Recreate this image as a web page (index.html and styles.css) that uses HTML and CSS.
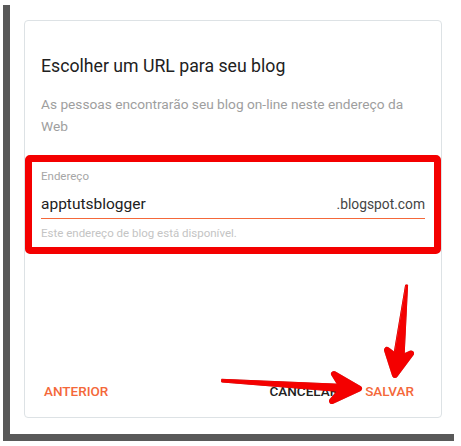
FILE: index.html
```html
<!DOCTYPE html>
<html lang="pt">
<head>
<meta charset="utf-8">
<title>Escolher um URL</title>
<link rel="stylesheet" href="styles.css">
</head>
<body>
<div class="frame">
  <div class="card">
    <h1 class="title">Escolher um URL para seu blog</h1>
    <p class="desc">As pessoas encontrarão seu blog on-line neste endereço da Web</p>
    <div class="field-box">
      <div class="label">Endereço</div>
      <div class="input-row">
        <span class="value">apptutsblogger</span>
        <span class="suffix">.blogspot.com</span>
      </div>
      <div class="helper">Este endereço de blog está disponível.</div>
    </div>
    <div class="actions">
      <span class="btn accent">ANTERIOR</span>
      <span class="spacer"></span>
      <span class="btn plain">CANCELAR</span>
      <span class="btn accent">SALVAR</span>
    </div>
  </div>
</div>
<svg class="arrows" width="461" height="446" viewBox="0 0 461 446" xmlns="http://www.w3.org/2000/svg">
  <g fill="#f40000" stroke="#f40000" stroke-linejoin="round" stroke-linecap="round">
    <polygon points="222,379.3 346,384.5 346,392 222,382" stroke-width="1"/>
    <polygon points="334,374 359,388.5 332,401 343,388.5" stroke-width="6"/>
    <polygon points="406,285 407.6,285 404,358 394,356" stroke-width="1"/>
    <polygon points="387,350 395,375 411,353.5 399,359" stroke-width="6"/>
  </g>
</svg>
</body>
</html>
```
FILE: styles.css
```css
html, body {
  margin: 0;
  padding: 0;
  background: #ffffff;
}
body {
  width: 461px;
  height: 446px;
  position: relative;
  overflow: hidden;
  font-family: Roboto, "Liberation Sans", Arial, sans-serif;
}
.frame {
  margin: 5px 0 0 3px;
  width: 430px;
  height: 414px;
  border-left: 7px solid #595959;
  border-bottom: 7px solid #595959;
  padding: 15px 0 0 14px;
  box-sizing: content-box;
}
.card {
  width: 384px;
  height: 396px;
  border: 1px solid #dde2e5;
  border-radius: 4px;
  padding: 0 16px;
  box-sizing: content-box;
  display: flex;
  flex-direction: column;
}
.title {
  margin: 33px 0 0;
  font-size: 17.7px;
  line-height: 24px;
  font-weight: 400;
  color: #212121;
}
.desc {
  margin: 15px 0 0;
  font-size: 13.7px;
  line-height: 22px;
  color: #9e9e9e;
}
.field-box {
  margin: 18px -16px 0;
  border: 7px solid #f40000;
  border-radius: 5px;
  padding: 7px 9px 7px 9px;
}
.label {
  font-size: 11.5px;
  line-height: 14px;
  color: #a6a6a6;
}
.input-row {
  margin-top: 11px;
  display: flex;
  justify-content: space-between;
  align-items: baseline;
  padding-bottom: 4px;
  border-bottom: 1px solid #f4683a;
}
.value {
  font-size: 15.5px;
  line-height: 20px;
  color: #212121;
}
.suffix {
  font-size: 13.8px;
  line-height: 20px;
  color: #444444;
}
.helper {
  margin-top: 7px;
  font-size: 11.5px;
  line-height: 14px;
  color: #c4c4c4;
}
.actions {
  margin-top: auto;
  margin-left: -16px;
  margin-right: -16px;
  padding: 0 27px 8px 19px;
  display: flex;
  align-items: center;
}
.spacer {
  flex: 1;
}
.btn {
  font-size: 13.5px;
  line-height: 36px;
  font-weight: 500;
}
.accent {
  color: #f4683a;
}
.plain {
  color: #212121;
  margin-right: 27px;
}
.arrows {
  position: absolute;
  left: 0;
  top: 0;
  pointer-events: none;
  filter: drop-shadow(0.5px 0.5px 0.6px rgba(80, 0, 0, 0.45));
}
```
